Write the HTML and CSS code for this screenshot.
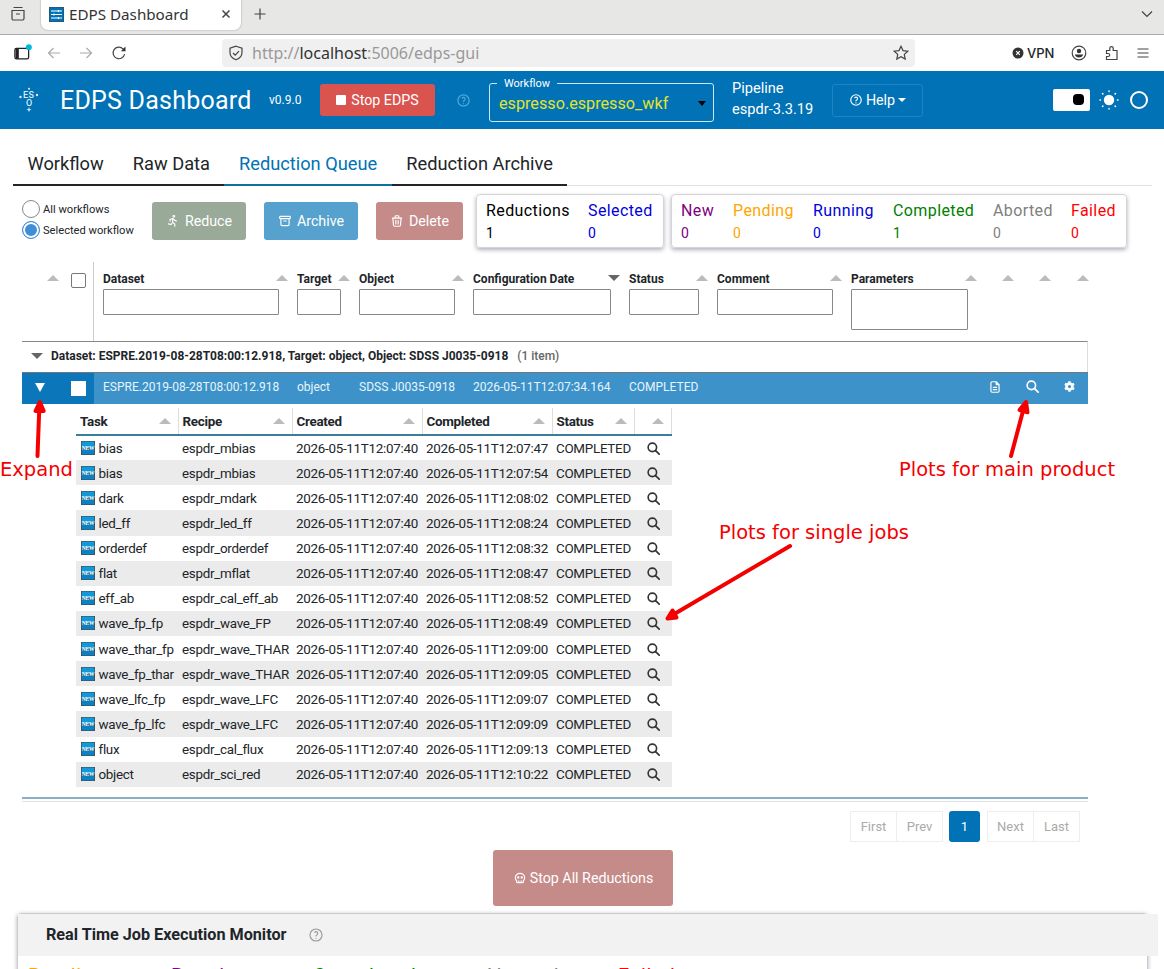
FILE: index.html
```html
<!DOCTYPE html>
<html lang="en">
<head>
    <meta charset="UTF-8">
    <title>EDPS Dashboard</title>
    <link rel="stylesheet" href="styles.css">
</head>
<body>
    <!-- Shared icons -->
    <svg class="sprite">
        <symbol id="help" viewBox="0 0 24 24"><circle cx="12" cy="12" r="9"/><path d="M12 17v.01M12 13.5a1.5 1.5 0 0 1 1-1.5 2.6 2.6 0 1 0-3-4"/></symbol>
        <symbol id="search" viewBox="0 0 16 16"><circle cx="6.6" cy="6.6" r="5.2"/><path d="M10.6 10.6 15 15"/></symbol>
        <symbol id="new" viewBox="0 0 14 14"><rect width="14" height="14" rx="1" fill="#1398d8"/><rect y="8" width="14" height="6" rx="1" fill="#0d80c4"/><text x="7" y="9" text-anchor="middle" font-size="5.5" font-weight="bold" font-family="Liberation Serif, serif" fill="#fff">NEW</text></symbol>
    </svg>

    <!-- Browser tabs -->
    <div class="tabstrip">
        <svg class="recent" viewBox="0 0 16 16"><path d="M3.5 1.5h9M2 4.5h12v8a1.5 1.5 0 0 1-1.5 1.5h-9A1.5 1.5 0 0 1 2 12.500zM6 8h4"/></svg>
        <div class="browser-tab">
            <svg class="favicon" viewBox="0 0 15 15"><rect width="15" height="15" rx="1.500" fill="#0072b5"/><path d="M2 4h11M2 7.500h11M2 11h11M9.500 3v2M5 6.500v2M9.500 10v2" stroke="#fff"/></svg>
            <span>EDPS Dashboard</span>
            <svg class="close" viewBox="0 0 10 10"><path d="M1.500 1.500l7 7M8.500 1.500l-7 7"/></svg>
        </div>
        <svg class="plus" viewBox="0 0 12 12"><path d="M6 .5v11M.5 6h11"/></svg>
        <svg class="chevron" viewBox="0 0 12 8"><path d="M1 1.500l5 5 5-5"/></svg>
    </div>

    <!-- Browser toolbar -->
    <div class="toolbar">
        <svg class="sidebar-icon" viewBox="0 0 18 16"><rect x="1.800" y="4" width="13" height="10" rx="1.500"/><path d="M4 4v10" stroke-width="3"/><circle cx="15" cy="3" r="2.800" fill="#00b8d9" stroke="none"/></svg>
        <svg class="nav-icon back" viewBox="0 0 14 12"><path d="M13 6H1.500M6.500 1l-5 5 5 5"/></svg>
        <svg class="nav-icon" viewBox="0 0 14 12"><path d="M1 6h11.500M7.500 1l5 5-5 5"/></svg>
        <svg class="reload" viewBox="0 0 16 16"><path d="M13.600 9A5.800 5.800 0 1 1 12 3.800L14 5.500"/><path d="M14.500 1.500v4.700H9.800z" fill="#333" stroke="none"/></svg>
        <div class="urlbar">
            <svg viewBox="0 0 16 16"><path d="M8 1.200 14 3.300v4.200c0 3.600-2.500 6-6 7.300-3.500-1.300-6-3.700-6-7.300V3.300zM5 8l2.200 2.200L11 6.200"/></svg>
            <span>http://<b>localhost</b>:5006/edps-gui</span>
            <svg class="star" viewBox="0 0 16 16"><path d="M8 1.300l2 4.300 4.800.6-3.500 3.200.9 4.700L8 11.800l-4.200 2.300.9-4.700L1.200 6.200 6 5.600z"/></svg>
        </div>
        <div class="vpn">
            <svg viewBox="0 0 12 12"><circle cx="6" cy="6" r="5.500" fill="#333" stroke="none"/><path d="M4.200 4.200l3.600 3.600M7.800 4.200 4.200 7.800" stroke="#fff"/></svg>
            <span>VPN</span>
        </div>
        <svg class="tool" viewBox="0 0 16 16"><circle cx="8" cy="8" r="6.800"/><circle cx="8" cy="6" r="2.200" fill="#333" stroke="none"/><path d="M3.800 9.500h8.400c-.6 2-2 3-4.200 3s-3.600-1-4.200-3z" fill="#333" stroke="none"/></svg>
        <svg class="tool" viewBox="0 0 16 16"><path d="M2.500 5.500h3.300V3.300a1.700 1.700 0 0 1 3.400 0v2.200h3.800v9H2.500v-3h1.700a1.500 1.500 0 0 0 0-3H2.500z"/></svg>
        <svg class="burger" viewBox="0 0 12 12"><path d="M.5 2h11M.5 6h11M.5 10h11"/></svg>
    </div>

    <!-- Application header -->
    <header class="header">
        <svg class="logo" viewBox="0 0 20 26"><g fill="#d8ecf8"><text x="4" y="11" font-size="9" font-weight="500" letter-spacing=".3">ES</text><text x="7" y="19" font-size="9" font-weight="500">O</text></g><g fill="#d8ecf8" stroke="none"><circle cx="10" cy="1.800" r="1"/><circle cx="1.500" cy="10" r="1.200"/><circle cx="18" cy="8" r="1.200"/><path d="M10 20l.7 1.900 1.900.7-1.900.7-.7 1.900-.7-1.900-1.900-.7 1.900-.7z"/></g></svg>
        <h1>EDPS Dashboard</h1>
        <span class="version">v0.9.0</span>
        <button class="btn stop"><i class="square"></i>Stop EDPS</button>
        <svg class="icon help-blue"><use href="#help"/></svg>
        <fieldset class="select">
            <legend>Workflow</legend>
            <span>espresso.espresso_wkf</span><i class="caret"></i>
        </fieldset>
        <div class="pipeline">Pipeline<br>espdr-3.3.19</div>
        <button class="btn help"><svg class="icon"><use href="#help"/></svg>Help<i class="caret"></i></button>
        <div class="toggle"><i></i></div>
        <svg class="sun" viewBox="0 0 20 20"><circle cx="10" cy="10" r="5.200" fill="#fff" stroke="none"/><path d="M10 1v.5M10 18.500v.5M1 10h.5M18.500 10h.5M3.500 3.500l.4.4M16.100 16.100l.4.4M3.500 16.500l.4-.4M16.100 3.900l.4-.4"/></svg>
        <i class="ring"></i>
    </header>

    <!-- Tabs -->
    <nav class="tabs">
        <a>Workflow</a>
        <a>Raw Data</a>
        <a class="active">Reduction Queue</a>
        <a>Reduction Archive</a>
    </nav>

    <!-- Actions and counters -->
    <section class="actions">
        <div class="radios">
            <label><i></i>All workflows</label>
            <label class="checked"><i></i>Selected workflow</label>
        </div>
        <button class="btn reduce"><svg class="icon" viewBox="0 0 24 24"><circle cx="13.500" cy="4" r="1.500"/><path d="M4 17l5 1 .75-1.500M15 21v-4l-4-3 1-6M7 12V9l5-1 3 3 3 1"/></svg>Reduce</button>
        <button class="btn archive"><svg class="icon" viewBox="0 0 24 24"><rect x="3" y="4" width="18" height="4" rx="1"/><path d="M5 8v10a2 2 0 0 0 2 2h10a2 2 0 0 0 2-2V8M10 12h4"/></svg>Archive</button>
        <button class="btn delete"><svg class="icon" viewBox="0 0 24 24"><path d="M4 7h16M10 11v6M14 11v6M5 7l1 12a2 2 0 0 0 2 2h8a2 2 0 0 0 2-2l1-12M9 7V4a1 1 0 0 1 1-1h4a1 1 0 0 1 1 1v3"/></svg>Delete</button>
        <div class="counts totals">
            <div class="black"><b>Reductions</b>1</div>
            <div class="blue"><b>Selected</b>0</div>
        </div>
        <div class="counts states">
            <div class="purple"><b>New</b>0</div>
            <div class="orange"><b>Pending</b>0</div>
            <div class="blue"><b>Running</b>0</div>
            <div class="green"><b>Completed</b>1</div>
            <div class="gray"><b>Aborted</b>0</div>
            <div class="red"><b>Failed</b>0</div>
        </div>
    </section>

    <!-- Reductions table -->
    <section class="queue">
        <div class="cols head">
            <div><i class="sort"></i></div>
            <div class="pick"><i class="check"></i></div>
            <div class="first">Dataset<i class="sort"></i><input type="text"></div>
            <div>Target<i class="sort"></i><input type="text"></div>
            <div>Object<i class="sort"></i><input type="text"></div>
            <div>Configuration Date<i class="sort down"></i><input type="text"></div>
            <div>Status<i class="sort"></i><input type="text"></div>
            <div>Comment<i class="sort"></i><input type="text"></div>
            <div>Parameters<i class="sort"></i><textarea></textarea></div>
            <div><i class="sort"></i></div>
            <div><i class="sort"></i></div>
            <div><i class="sort"></i></div>
        </div>
        <div class="group"><i class="sort down"></i>Dataset: ESPRE.2019-08-28T08:00:12.918, Target: object, Object: SDSS J0035-0918<em>(1 item)</em></div>
        <div class="cols selected">
            <div class="frozen"><i class="open"></i></div>
            <div class="frozen"><i class="check"></i></div>
            <div class="first">ESPRE.2019-08-28T08:00:12.918</div>
            <div>object</div>
            <div>SDSS J0035-0918</div>
            <div>2026-05-11T12:07:34.164</div>
            <div>COMPLETED</div>
            <div></div>
            <div></div>
            <div class="act"><svg class="icon" viewBox="0 0 24 24"><path d="M14 3v4a1 1 0 0 0 1 1h4M17 21H7a2 2 0 0 1-2-2V5a2 2 0 0 1 2-2h7l5 5v11a2 2 0 0 1-2 2zM9 12.500h6M9 16.500h6"/></svg></div>
            <div class="act"><svg class="lens"><use href="#search"/></svg></div>
            <div class="act"><svg class="gear" viewBox="0 0 16 16"><circle cx="8" cy="8" r="3.600" stroke-width="3.200"/><path d="M8 1.500v2M8 12.500v2M2.400 4.750l1.700 1M11.900 10.250l1.700 1M2.400 11.250l1.700-1M11.900 5.750l1.700-1" stroke-width="3"/></svg></div>
        </div>

        <table class="jobs">
            <thead>
                <tr><th>Task<i class="sort"></i></th><th>Recipe<i class="sort"></i></th><th>Created<i class="sort"></i></th><th>Completed<i class="sort"></i></th><th>Status<i class="sort"></i></th><th>&nbsp;<i class="sort"></i></th></tr>
            </thead>
            <tbody>
                <tr><td><svg class="new"><use href="#new"/></svg>bias</td><td>espdr_mbias</td><td>2026-05-11T12:07:40</td><td>2026-05-11T12:07:47</td><td>COMPLETED</td><td><svg class="lens"><use href="#search"/></svg></td></tr>
                <tr><td><svg class="new"><use href="#new"/></svg>bias</td><td>espdr_mbias</td><td>2026-05-11T12:07:40</td><td>2026-05-11T12:07:54</td><td>COMPLETED</td><td><svg class="lens"><use href="#search"/></svg></td></tr>
                <tr><td><svg class="new"><use href="#new"/></svg>dark</td><td>espdr_mdark</td><td>2026-05-11T12:07:40</td><td>2026-05-11T12:08:02</td><td>COMPLETED</td><td><svg class="lens"><use href="#search"/></svg></td></tr>
                <tr><td><svg class="new"><use href="#new"/></svg>led_ff</td><td>espdr_led_ff</td><td>2026-05-11T12:07:40</td><td>2026-05-11T12:08:24</td><td>COMPLETED</td><td><svg class="lens"><use href="#search"/></svg></td></tr>
                <tr><td><svg class="new"><use href="#new"/></svg>orderdef</td><td>espdr_orderdef</td><td>2026-05-11T12:07:40</td><td>2026-05-11T12:08:32</td><td>COMPLETED</td><td><svg class="lens"><use href="#search"/></svg></td></tr>
                <tr><td><svg class="new"><use href="#new"/></svg>flat</td><td>espdr_mflat</td><td>2026-05-11T12:07:40</td><td>2026-05-11T12:08:47</td><td>COMPLETED</td><td><svg class="lens"><use href="#search"/></svg></td></tr>
                <tr><td><svg class="new"><use href="#new"/></svg>eff_ab</td><td>espdr_cal_eff_ab</td><td>2026-05-11T12:07:40</td><td>2026-05-11T12:08:52</td><td>COMPLETED</td><td><svg class="lens"><use href="#search"/></svg></td></tr>
                <tr><td><svg class="new"><use href="#new"/></svg>wave_fp_fp</td><td>espdr_wave_FP</td><td>2026-05-11T12:07:40</td><td>2026-05-11T12:08:49</td><td>COMPLETED</td><td><svg class="lens"><use href="#search"/></svg></td></tr>
                <tr><td><svg class="new"><use href="#new"/></svg>wave_thar_fp</td><td>espdr_wave_THAR</td><td>2026-05-11T12:07:40</td><td>2026-05-11T12:09:00</td><td>COMPLETED</td><td><svg class="lens"><use href="#search"/></svg></td></tr>
                <tr><td><svg class="new"><use href="#new"/></svg>wave_fp_thar</td><td>espdr_wave_THAR</td><td>2026-05-11T12:07:40</td><td>2026-05-11T12:09:05</td><td>COMPLETED</td><td><svg class="lens"><use href="#search"/></svg></td></tr>
                <tr><td><svg class="new"><use href="#new"/></svg>wave_lfc_fp</td><td>espdr_wave_LFC</td><td>2026-05-11T12:07:40</td><td>2026-05-11T12:09:07</td><td>COMPLETED</td><td><svg class="lens"><use href="#search"/></svg></td></tr>
                <tr><td><svg class="new"><use href="#new"/></svg>wave_fp_lfc</td><td>espdr_wave_LFC</td><td>2026-05-11T12:07:40</td><td>2026-05-11T12:09:09</td><td>COMPLETED</td><td><svg class="lens"><use href="#search"/></svg></td></tr>
                <tr><td><svg class="new"><use href="#new"/></svg>flux</td><td>espdr_cal_flux</td><td>2026-05-11T12:07:40</td><td>2026-05-11T12:09:13</td><td>COMPLETED</td><td><svg class="lens"><use href="#search"/></svg></td></tr>
                <tr><td><svg class="new"><use href="#new"/></svg>object</td><td>espdr_sci_red</td><td>2026-05-11T12:07:40</td><td>2026-05-11T12:10:22</td><td>COMPLETED</td><td><svg class="lens"><use href="#search"/></svg></td></tr>
            </tbody>
        </table>

        <div class="pager">
            <span>First</span><span>Prev</span><span class="page">1</span><span>Next</span><span>Last</span>
        </div>
    </section>

    <button class="btn stop-all"><svg class="icon" viewBox="0 0 24 24"><path d="M12 4c4.400 0 8 3.400 8 7.500 0 2-.9 3.800-2.300 5.200l.3 1.800a1.500 1.500 0 0 1-1.500 1.500h-9A1.500 1.500 0 0 1 6 18.500l.3-1.800A7.200 7.200 0 0 1 4 11.500C4 7.400 7.600 4 12 4zM10 17v3M14 17v3"/><circle cx="9" cy="11" r="1"/><circle cx="15" cy="11" r="1"/></svg>Stop All Reductions</button>

    <!-- Job monitor -->
    <section class="monitor">
        <h2>Real Time Job Execution Monitor<svg class="icon"><use href="#help"/></svg></h2>
        <div class="legend">
            <span class="orange">Pending</span><span class="purple">Running</span><span class="green">Completed</span><span class="gray">Aborted</span><span class="red">Failed</span>
        </div>
    </section>

    <!-- Annotations over the page -->
    <div class="notes">
        <svg viewBox="0 0 1164 969">
            <g stroke="#f40000" stroke-width="4" stroke-linecap="round" stroke-linejoin="round" fill="#f40000">
                <path d="M37.500 456 39.300 408"/><path d="M39.800 402 35.500 411h8.200z"/>
                <path d="M1011 456 1023 411"/><path d="M1026 402 1019.500 410l8 2.200z"/>
                <path d="M790 546 676 613"/><path d="M667.500 618.500 672.500 610.500l4 7z"/>
            </g>
        </svg>
        <p class="note expand">Expand</p>
        <p class="note main-product">Plots for main product</p>
        <p class="note single-jobs">Plots for single jobs</p>
    </div>
</body>
</html>
```
FILE: styles.css
```css
* {
    box-sizing: border-box;
}
body {
    margin: 0;
    width: 1164px;
    height: 969px;
    overflow: hidden;
    position: relative;
    background-color: #fff;
    color: #212529;
    font-family: Roboto, sans-serif;
}
svg {
    fill: none;
    stroke: #444;
    stroke-width: 1.2;
    flex: none;
}
text {
    stroke: none;
}
.sprite {
    display: none;
}
.icon {
    width: 14px;
    height: 14px;
    stroke: currentColor;
    stroke-width: 2;
    stroke-linecap: round;
    stroke-linejoin: round;
}

/* Browser chrome */
.tabstrip {
    height: 35px;
    display: flex;
    align-items: center;
    padding: 0 11px 6px 10px;
    background-color: #e7e7e6;
    border-bottom: 1px solid #aaa;
}
.recent {
    width: 16px;
    height: 16px;
}
.browser-tab {
    width: 200px;
    height: 31px;
    margin-left: 15px;
    padding: 0 10px 0 8px;
    display: flex;
    align-items: center;
    background-color: #fff;
    border-radius: 0 0 7px 7px;
    box-shadow: 0 0 2px #999;
    color: #333;
    font: 15.2px "Noto Sans", sans-serif;
}
.favicon {
    width: 15px;
    height: 15px;
    margin-right: 5px;
}
.close {
    width: 10px;
    height: 10px;
    margin-left: auto;
    stroke-width: 1.5;
}
.plus {
    width: 12px;
    height: 12px;
    margin-left: 13px;
}
.chevron {
    width: 12px;
    height: 8px;
    margin-left: auto;
}
.toolbar {
    height: 36px;
    display: flex;
    align-items: center;
    padding: 0 13px;
    font-family: "Noto Sans", sans-serif;
}
.sidebar-icon {
    width: 19px;
    height: 17px;
    margin-bottom: 2px;
    stroke: #222;
}
.nav-icon {
    width: 14px;
    height: 12px;
    margin-right: 18px;
    stroke: #aaa;
}
.nav-icon.back {
    margin-left: 15px;
}
.reload {
    width: 16px;
    height: 16px;
}
.urlbar {
    width: 693px;
    height: 28px;
    margin-left: 95px;
    padding: 0 6px;
    display: flex;
    align-items: center;
    background-color: #f0f0f0;
    border-radius: 4px;
    color: #999;
    font-size: 16px;
}
.urlbar svg {
    width: 16px;
    height: 16px;
    margin-right: 8px;
}
.urlbar b {
    color: #333;
    font-weight: normal;
}
.urlbar .star {
    margin: 0 0 0 auto;
}
.vpn {
    display: flex;
    align-items: center;
    gap: 3px;
    margin: 0 17px 0 97px;
    font: 500 13px Inter, sans-serif;
}
.vpn svg {
    width: 12px;
    height: 12px;
}
.tool {
    width: 16px;
    height: 16px;
    margin-right: 17px;
}
.burger {
    width: 12px;
    height: 12px;
}

/* Header */
.header {
    height: 58px;
    display: flex;
    align-items: center;
    padding-left: 19px;
    background-color: #0072b5;
    color: #fff;
}
.logo {
    width: 20px;
    height: 26px;
}
h1 {
    width: 212px;
    margin: 0;
    padding-left: 21px;
    font-size: 25px;
    font-weight: 400;
    letter-spacing: .23px;
    white-space: nowrap;
}
.version {
    width: 51px;
    padding-left: 18px;
    font-size: 12px;
}
.btn {
    display: flex;
    align-items: center;
    justify-content: center;
    gap: 5px;
    padding: 0;
    border: 0;
    border-radius: 3px;
    color: #fff;
    font: 14.25px Roboto, sans-serif;
}
.stop {
    width: 115px;
    height: 32px;
    margin-left: 18px;
    background-color: #d9534f;
}
.square {
    width: 10px;
    height: 10px;
    border-radius: 1px;
    background-color: #fff;
}
.help-blue {
    width: 15px;
    height: 15px;
    margin: 0 18px 0 21px;
    color: #4fa8dc;
}
.select {
    width: 225px;
    height: 43px;
    margin: 0;
    padding: 0 7px 3px 9px;
    display: flex;
    align-items: center;
    justify-content: space-between;
    border: 1px solid #cfe6f4;
    border-radius: 3px;
    color: #e3e32c;
    font-size: 16.200px;
}
.select legend {
    height: 10px;
    margin-left: -2px;
    padding: 0 7px;
    color: #fff;
    font-size: 11px;
    line-height: 10px;
}
.caret {
    border: 4px solid transparent;
    border-top: 5px solid #000;
    border-bottom: 0;
}
.pipeline {
    width: 100px;
    margin: -3px 0 0 18px;
    font-size: 14.600px;
    line-height: 21px;
}
.help {
    width: 91px;
    height: 33px;
    gap: 3px;
    background-color: transparent;
    border: 1px solid #1f84c1;
}
.help .caret {
    border-width: 4px 4px 0;
    border-top-color: #fff;
}
.toggle {
    width: 37px;
    height: 22px;
    margin-left: 130px;
    padding: 5px 6px;
    display: flex;
    justify-content: flex-end;
    background-color: #fff;
    border-radius: 2px;
}
.toggle i {
    width: 11px;
    height: 11px;
    border-radius: 4px;
    background-color: #000;
}
.sun {
    width: 20px;
    height: 20px;
    margin: 0 11px 0 9px;
    stroke: #fff;
    stroke-width: 1.5;
    stroke-linecap: round;
}
.ring {
    width: 18px;
    height: 18px;
    border: 2px solid #fff;
    border-radius: 50%;
}

/* Tabs */
.tabs {
    width: 1139px;
    height: 57px;
    margin-left: 13px;
    display: flex;
    align-items: flex-end;
    border-bottom: 1px solid #dee2e6;
}
.tabs a {
    height: 44px;
    margin-bottom: -1px;
    padding: 0 14.500px;
    border-bottom: 2px solid #212529;
    font-size: 18.250px;
    line-height: 43px;
}
.tabs .active {
    color: #0072b5;
    border-color: #0f7099;
}

/* Actions */
.actions {
    display: flex;
    align-items: center;
    height: 70px;
    padding-left: 22px;
}
.radios {
    width: 130px;
    padding-bottom: 3px;
    font-size: 11.150px;
}
.radios label {
    display: flex;
    align-items: center;
    gap: 3px;
    height: 21px;
    white-space: nowrap;
}
.radios i {
    width: 18px;
    height: 18px;
    border: 1px solid #888;
    border-radius: 50%;
}
.radios .checked i {
    border-color: #3f8ed6;
    background-color: #3f8ed6;
    box-shadow: inset 0 0 0 2px #fff;
}
.actions .btn {
    width: 94px;
    height: 38px;
    margin-right: 18px;
}
.actions .reduce {
    background-color: #99aa99;
}
.actions .archive {
    background-color: #56a1cd;
}
.actions .delete {
    width: 87px;
    margin-right: 13px;
    background-color: #c48b89;
}
.counts {
    height: 54px;
    padding: 6px 0 0 9px;
    display: grid;
    border: 1px solid #d4d4d4;
    border-radius: 4px;
    box-shadow: 0 2px 4px rgba(60, 60, 100, .4);
    font-size: 14px;
    line-height: 24px;
}
.counts b {
    display: block;
    font-size: 16px;
    font-weight: 400;
    line-height: 20px;
    letter-spacing: .4px;
}
.totals {
    width: 188px;
    margin-right: 7px;
    grid-template-columns: 102px 1fr;
}
.states {
    width: 456px;
    grid-template-columns: 52px 80px 80px 100px 78px 1fr;
}
.black { color: #000; }
.blue { color: #0000e0; }
.purple { color: #800080; }
.orange { color: #ffa500; }
.green { color: #008000; }
.gray { color: #808080; }
.red { color: #f00; }

/* Queue table */
.queue {
    width: 1066px;
    margin: 6px 0 0 22px;
}
.cols {
    display: grid;
    grid-template-columns: 36px 36px 193px 62px 114px 156px 88px 134px 135px 37px 37px 1fr;
    font-size: 12px;
}
.head {
    height: 79px;
    font-weight: 700;
}
.head > div {
    padding: 9px 8px 0 10px;
    line-height: 16px;
}
.head .pick {
    padding: 11px 0 0 13px;
    border-right: 1px solid #ccc;
}
.cols > .first {
    padding-left: 9px;
}
.sort {
    float: right;
    width: 0;
    margin: 4px -9px 0 0;
    border: 6px solid transparent;
    border-top: 0;
    border-bottom: 6px solid #bbb;
}
.sort.down {
    border-top: 6px solid #666;
    border-bottom: 0;
}
.head input,
.head textarea {
    display: block;
    width: 100%;
    height: 26px;
    margin-top: 2px;
    border: 1px solid #888;
    border-radius: 1px;
    background-color: #fff;
    resize: none;
}
.head textarea {
    height: 41px;
}
.check {
    display: block;
    width: 15px;
    height: 15px;
    border: 1px solid #777;
    border-radius: 2px;
    background-color: #fff;
}
.group {
    height: 31px;
    display: flex;
    align-items: center;
    padding: 0 0 3px 9px;
    border-top: 1px solid #888;
    border-right: 1px solid #ddd;
    font-size: 11.970px;
    font-weight: 700;
}
.group .sort {
    margin: 0 8px 0 0;
}
.group em {
    margin-left: 9px;
    color: #666;
    font-style: normal;
    font-weight: 500;
}
.selected {
    height: 32px;
    background-color: #3d93c9;
    color: #e8f4fb;
    border-top: 1px solid #777;
}
.selected > div {
    padding-left: 10px;
    line-height: 28px;
    white-space: nowrap;
}
.selected > .first {
    padding-left: 9px;
}
.selected > .frozen {
    display: flex;
    align-items: center;
    padding-left: 13px;
    background-color: #0b76b9;
}
.selected .check {
    border-color: #fff;
    border-radius: 0;
}
.open {
    margin-bottom: 2px;
    border: 5px solid transparent;
    border-top: 9px solid #fff;
    border-bottom: 0;
}
.selected .act {
    display: flex;
    justify-content: center;
    padding: 7px 0 0 1px;
    color: #fff;
}
.act .icon {
    width: 14px;
    height: 14px;
}
.act svg {
    stroke: #fff;
}
.lens {
    width: 13px;
    height: 13px;
    stroke: #333;
    stroke-width: 2;
    stroke-linecap: round;
}
.gear {
    width: 13px;
    height: 13px;
}

/* Jobs of the expanded dataset */
.jobs {
    width: 596px;
    margin: 4px 0 0 54px;
    border-collapse: collapse;
    table-layout: fixed;
    font-size: 13.400px;
    letter-spacing: -.28px;
    white-space: nowrap;
}
.jobs th {
    height: 27px;
    padding: 0 7px 0 4px;
    border-right: 1px solid #ddd;
    border-bottom: 2px solid #3a7e9b;
    text-align: left;
    font-weight: 700;
    line-height: 17px;
}
.jobs .sort {
    margin: 5px 0 0;
}
.jobs td {
    height: 25.140px;
    padding: 1px 0 0 4px;
    line-height: 17px;
}
.jobs th:nth-child(1) { width: 102px; }
.jobs th:nth-child(2) { width: 114px; }
.jobs th:nth-child(3) { width: 130px; }
.jobs th:nth-child(4) { width: 130px; }
.jobs th:nth-child(5) { width: 82px; }
.jobs tbody tr:nth-child(even) {
    background-color: #ebebeb;
}
.jobs svg {
    vertical-align: -2px;
}
.jobs td:last-child {
    padding-left: 13px;
}
.new {
    width: 14px;
    height: 14px;
    margin: 0 4px 0 .5px;
}

/* Pager */
.pager {
    height: 53px;
    margin-top: 10px;
    padding: 12px 8px 0 0;
    display: flex;
    justify-content: flex-end;
    border-top: 2px solid #8aafc4;
    box-shadow: inset 0 2px #fff, inset 0 3px #dde3e8;
    font-size: 13px;
    color: #aaa;
}
.pager span {
    width: 47px;
    height: 31px;
    margin-left: -1px;
    border: 1px solid #eee;
    line-height: 29px;
    text-align: center;
}
.pager .page {
    width: 31px;
    margin: 0 8px 0 6px;
    border: 0;
    border-radius: 3px;
    background-color: #0072b5;
    color: #fff;
    line-height: 31px;
}
.stop-all {
    width: 180px;
    height: 56px;
    margin-left: 493px;
    gap: 3px;
    background-color: #c48b89;
}

/* Monitor */
.monitor {
    width: 1131px;
    height: 80px;
    margin: 7px 0 0 17px;
    border: 1px solid #ccc;
    border-radius: 4px;
    box-shadow: 0 1px 4px rgba(60, 60, 100, .4);
}
h2 {
    width: 1140px;
    height: 42px;
    margin: 0;
    padding-left: 28px;
    display: flex;
    align-items: center;
    gap: 21px;
    background-color: #f2f2f2;
    font-size: 16.200px;
    font-weight: 700;
}
h2 .icon {
    width: 16px;
    height: 16px;
    color: #999;
    stroke-width: 1.7;
}
.legend {
    display: grid;
    grid-template-columns: 143px 142px 170px 135px 1fr;
    padding: 8px 0 0 10px;
    font-size: 20px;
    letter-spacing: .7px;
}

/* Annotations */
.notes {
    position: absolute;
    inset: 0;
}
.note {
    position: absolute;
    margin: 0;
    color: #f40000;
    font: 19.500px/22px "DejaVu Sans", sans-serif;
    white-space: nowrap;
}
.expand {
    left: 0;
    top: 459px;
}
.main-product {
    left: 899px;
    top: 459px;
}
.single-jobs {
    left: 719px;
    top: 522px;
}
```
